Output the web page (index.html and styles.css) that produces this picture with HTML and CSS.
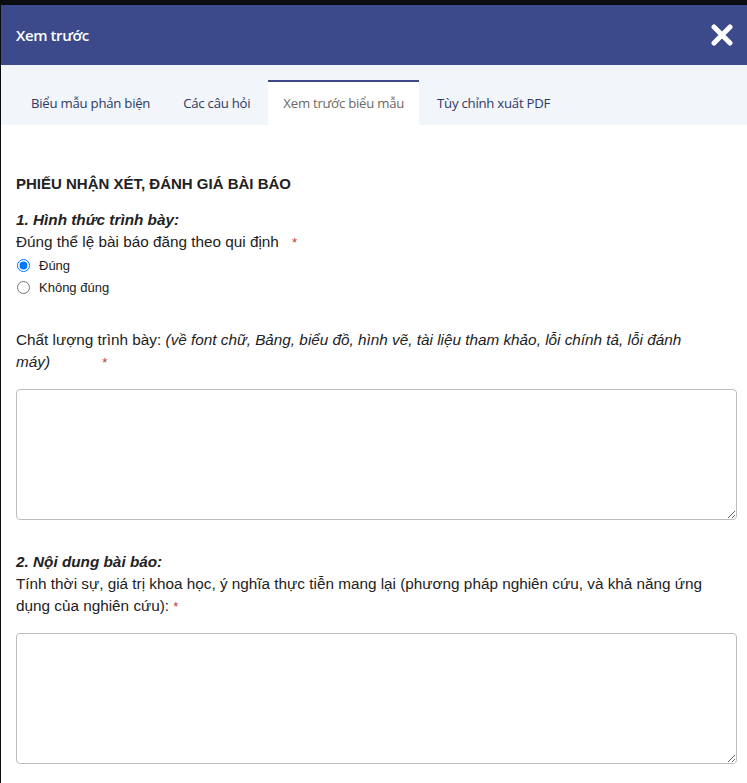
FILE: index.html
```html
<!DOCTYPE html>
<html lang="vi">
<head>
  <meta charset="UTF-8" />
  <meta name="viewport" content="width=device-width, initial-scale=1.0">
  <title>Xem trước</title>
  <link rel="stylesheet" href="styles.css">
</head>
<body>
  <div class="modal">
    <div class="modal-header">
      <div class="modal-title">Xem trước</div>
      <span class="close-btn">
        <svg width="22" height="22" viewBox="0 0 22 22">
          <path d="M3 3 L19 19 M19 3 L3 19" stroke="#fff" stroke-width="5" stroke-linecap="round"/>
        </svg>
      </span>
    </div>

    <div class="tabs">
      <a class="tab">Biểu mẫu phản biện</a>
      <a class="tab">Các câu hỏi</a>
      <a class="tab active">Xem trước biểu mẫu</a>
      <a class="tab">Tùy chỉnh xuất PDF</a>
    </div>

    <div class="form-body">
      <h3 class="form-title">PHIẾU NHẬN XÉT, ĐÁNH GIÁ BÀI BÁO</h3>

      <!-- Section 1 -->
      <div class="section-title">1. Hình thức trình bày:</div>
      <div class="question">Đúng thể lệ bài báo đăng theo qui định <span class="req">*</span></div>
      <label class="radio"><input type="radio" name="q1" checked> Đúng</label>
      <label class="radio"><input type="radio" name="q1"> Không đúng</label>

      <div class="question spaced">Chất lượng trình bày: <i>(về font chữ, Bảng, biểu đồ, hình vẽ, tài liệu tham khảo, lỗi chính tả, lỗi đánh máy)</i> <span class="req req-far">*</span></div>
      <textarea class="answer"></textarea>

      <!-- Section 2 -->
      <div class="section-title">2. Nội dung bài báo:</div>
      <div class="question">Tính thời sự, giá trị khoa học, ý nghĩa thực tiễn mang lại (phương pháp nghiên cứu, và khả năng ứng dụng của nghiên cứu):<span class="req req-near">*</span></div>
      <textarea class="answer"></textarea>
    </div>
  </div>
</body>
</html>
```

FILE: styles.css
```css
body {
  margin: 0;
  background: #0b0c10;
  font-family: "Liberation Sans", Arial, sans-serif;
  color: #222;
}

.modal {
  margin: 5px 0 0 1px;
  background: #fff;
  min-height: 778px;
}

.modal-header {
  height: 60px;
  background: #3c4a8c;
  display: flex;
  align-items: center;
  justify-content: space-between;
  padding: 0 14px 0 15px;
}

.modal-title {
  color: #fff;
  font-family: "Open Sans", sans-serif;
  font-weight: 600;
  font-size: 15px;
  letter-spacing: -0.4px;
}

.close-btn {
  display: flex;
}

.tabs {
  height: 60px;
  background: #f2f5f9;
  display: flex;
  padding-left: 15px;
}

.tab {
  display: flex;
  align-items: center;
  padding: 0 15px 2px;
  margin-right: 3px;
  font-family: "Open Sans", sans-serif;
  font-size: 13.2px;
  letter-spacing: -0.25px;
  color: #2d3a66;
  margin-top: 15px;
  border-top: 2px solid transparent;
}

.tab.active {
  background: #fff;
  color: #6a6a6a;
  border-top-color: #3c4a8c;
}

.form-body {
  padding: 50px 10px 0 15px;
}

.form-title {
  margin: 0 0 17px;
  font-size: 15px;
  font-weight: bold;
}

.section-title {
  font-weight: bold;
  font-style: italic;
  font-size: 15.3px;
  line-height: 22px;
}

.question {
  font-size: 15.3px;
  line-height: 22px;
  padding-right: 20px;
}

.question.spaced {
  margin-top: 31px;
}

.req {
  color: #c0392b;
  font-size: 13px;
  margin-left: 9px;
}

.req-far {
  margin-left: 48px;
}

.req-near {
  margin-left: 4px;
}

.radio {
  display: flex;
  align-items: center;
  gap: 9px;
  font-size: 13px;
  height: 22px;
}

.radio input {
  margin: 0 0 0 1px;
  width: 13px;
  height: 13px;
}

.answer {
  display: block;
  box-sizing: border-box;
  width: 721px;
  height: 131px;
  margin: 15px 0 31px 0;
  border: 1px solid #bdbdbd;
  border-radius: 4px;
  resize: vertical;
}
```
